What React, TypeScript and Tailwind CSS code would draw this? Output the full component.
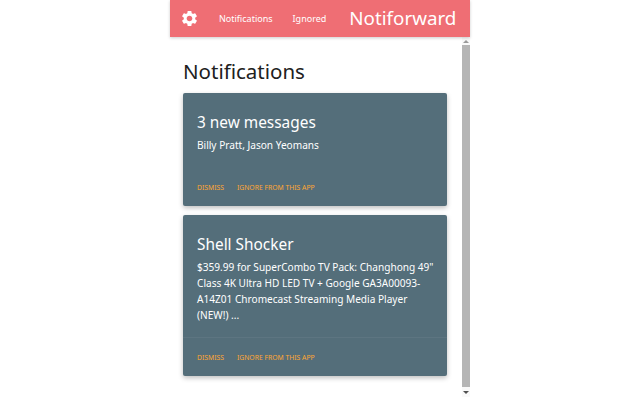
import { MdSettings } from "react-icons/md";

const cards = [
  {
    title: "3 new messages",
    body: "Billy Pratt, Jason Yeomans",
    bodyClass: "h-[75px]",
  },
  {
    title: "Shell Shocker",
    body: '$359.99 for SuperCombo TV Pack: Changhong 49" Class 4K Ultra HD LED TV + Google GA3A00093-A14Z01 Chromecast Streaming Media Player (NEW!) ...',
    bodyClass: "h-[123px] border-b border-white/5",
  },
];

function Card({ title, body, bodyClass }: { title: string; body: string; bodyClass: string }) {
  return (
    <div className="rounded-[2px] bg-[#546e7a] text-white shadow-[0_2px_5px_rgba(0,0,0,0.25)]">
      <div className={`${bodyClass} pl-[14px] pr-[9px] pt-[17px]`}>
        <div className="text-[15.4px] leading-[26px]">{title}</div>
        <p className="mt-[1px] text-[10.1px] leading-[16px]">{body}</p>
      </div>
      <div className="flex h-[38px] items-center gap-[13px] px-[14px] pt-[2px] text-[6.8px] uppercase text-[#ffa733]">
        <span>Dismiss</span>
        <span>Ignore from this app</span>
      </div>
    </div>
  );
}

export default function App() {
  return (
    <div className="h-[400px] w-[640px] overflow-hidden bg-white font-['Noto_Sans','Open_Sans',sans-serif]">
      <div className="mx-auto flex h-[400px] w-[300px] flex-col">
        {/* Header */}
        <div className="z-10 flex h-[37px] shrink-0 items-center bg-[#ef6e74] pl-[10px] text-white shadow-[0_1px_3px_rgba(0,0,0,0.2)]">
          <MdSettings className="h-[19px] w-[19px]" />
          <span className="ml-[20px] text-[9px]">Notifications</span>
          <span className="ml-[20px] text-[9px]">Ignored</span>
          <span className="ml-[23px] text-[18.8px]">Notiforward</span>
        </div>
        <div className="flex min-h-0 flex-1">
          <div className="flex-1 pl-[13px] pr-[15px]">
            <h1 className="mt-[19px] text-[20.5px] leading-[30px] text-[#212121]">Notifications</h1>
            <div className="mt-[7px] flex flex-col gap-[9px]">
              {cards.map((c) => (
                <Card key={c.title} {...c} />
              ))}
            </div>
          </div>
          {/* Scrollbar */}
          <div className="flex h-[360px] w-[8px] flex-col items-center bg-[#f9f9f9]">
            <div className="flex h-[8px] items-center">
              <div className="border-x-[3px] border-b-[3px] border-x-transparent border-b-[#9a9a9a]" />
            </div>
            <div className="w-full flex-1 bg-[#b5b5b5]" />
            <div className="flex h-[10px] items-center">
              <div className="border-x-[3px] border-t-[3px] border-x-transparent border-t-[#505050]" />
            </div>
          </div>
        </div>
      </div>
    </div>
  );
}
